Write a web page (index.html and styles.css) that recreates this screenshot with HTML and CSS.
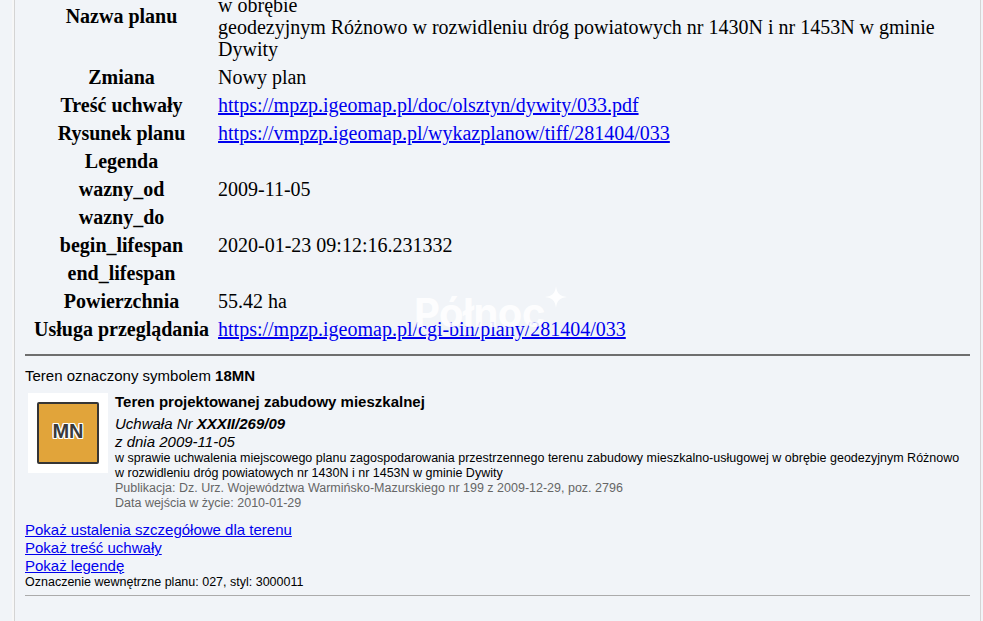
FILE: index.html
```html
<!DOCTYPE html>
<html lang="pl">

<head>
    <meta charset="UTF-8">
    <meta name="viewport" content="width=device-width, initial-scale=1.0">
    <title>Plan miejscowy - Dywity</title>
    <link rel="stylesheet" href="styles.css">
</head>

<body>
    <div class="sheet">
        <table class="plan">
            <tr>
                <th>Nazwa planu</th>
                <td>Miejscowy plan zagospodarowania przestrzennego terenu zabudowy<br>w obrębie<br>geodezyjnym Różnowo w rozwidleniu dróg powiatowych nr 1430N i nr 1453N w gminie Dywity</td>
            </tr>
            <tr>
                <th>Zmiana</th>
                <td>Nowy plan</td>
            </tr>
            <tr>
                <th>Treść uchwały</th>
                <td><a href="#">https://mpzp.igeomap.pl/doc/olsztyn/dywity/033.pdf</a></td>
            </tr>
            <tr>
                <th>Rysunek planu</th>
                <td><a href="#">https://vmpzp.igeomap.pl/wykazplanow/tiff/281404/033</a></td>
            </tr>
            <tr>
                <th>Legenda</th>
                <td></td>
            </tr>
            <tr>
                <th>wazny_od</th>
                <td>2009-11-05</td>
            </tr>
            <tr>
                <th>wazny_do</th>
                <td></td>
            </tr>
            <tr>
                <th>begin_lifespan</th>
                <td>2020-01-23 09:12:16.231332</td>
            </tr>
            <tr>
                <th>end_lifespan</th>
                <td></td>
            </tr>
            <tr>
                <th>Powierzchnia</th>
                <td>55.42 ha</td>
            </tr>
            <tr>
                <th>Usługa przeglądania</th>
                <td><a href="#">https://mpzp.igeomap.pl/cgi-bin/plany/281404/033</a></td>
            </tr>
        </table>

        <hr class="rule">

        <p class="symbol">Teren oznaczony symbolem <b>18MN</b></p>

        <div class="zone">
            <div class="zone-icon">
                <div class="zone-swatch">MN</div>
            </div>
            <div class="zone-info">
                <div class="zone-title">Teren projektowanej zabudowy mieszkalnej</div>
                <div class="resolution">Uchwała Nr <b>XXXII/269/09</b></div>
                <div class="resolution">z dnia 2009-11-05</div>
                <div class="subject">w sprawie uchwalenia miejscowego planu zagospodarowania przestrzennego terenu zabudowy mieszkalno-usługowej w obrębie geodezyjnym Różnowo w rozwidleniu dróg powiatowych nr 1430N i nr 1453N w gminie Dywity</div>
                <div class="meta">Publikacja: Dz. Urz. Województwa Warmińsko-Mazurskiego nr 199 z 2009-12-29, poz. 2796</div>
                <div class="meta">Data wejścia w życie: 2010-01-29</div>
            </div>
        </div>

        <div class="links">
            <a href="#">Pokaż ustalenia szczegółowe dla terenu</a>
            <a href="#">Pokaż treść uchwały</a>
            <a href="#">Pokaż legendę</a>
        </div>
        <div class="internal">Oznaczenie wewnętrzne planu: 027, styl: 3000011</div>

        <hr class="rule light">
    </div>

    <div class="brand">Północ<svg class="brand-star" viewBox="0 0 24 24" width="22" height="22"><path d="M12 0C13 8 16 11 24 12C16 13 13 16 12 24C11 16 8 13 0 12C8 11 11 8 12 0Z" fill="currentColor"/></svg></div>
</body>

</html>
```

FILE: styles.css
```css
html {
    overflow: hidden;
}

body {
    margin: 0;
    background-color: #F1F4F8;
    font-family: "Liberation Sans", Arial, sans-serif;
    color: #000;
}

.sheet {
    margin: -31px 2px 0 14px;
    padding: 0 10px 0 10px;
    border-left: 1px solid #D4D4D4;
    border-right: 1px solid #D4D4D4;
    box-shadow: -2px 0 0 #F7F7F7;
    min-height: 700px;
}

table.plan {
    width: 100%;
    border-collapse: collapse;
    font-family: "Liberation Serif", "Times New Roman", serif;
    font-size: 20px;
    line-height: 22px;
}

table.plan th {
    width: 1%;
    white-space: nowrap;
    padding: 3px 3px 3px 9px;
    text-align: center;
}

table.plan td {
    padding: 3px 6px;
    text-align: left;
}

a {
    color: #0000EE;
}

hr.rule {
    margin: 11px 0 0 0;
    border: none;
    border-top: 2px solid #6E6E6E;
}

hr.rule.light {
    margin-top: 5px;
    border-top: 1px solid #ABABAB;
}

.symbol {
    margin: 12px 0 0 0;
    font-size: 15px;
    line-height: 16px;
}

.zone {
    display: flex;
    gap: 7px;
    margin: 9px 0 0 3px;
}

.zone-icon {
    flex: 0 0 80px;
    height: 80px;
    background-color: #FFF;
    display: flex;
    align-items: center;
    justify-content: center;
}

.zone-swatch {
    width: 58px;
    height: 54px;
    padding-bottom: 4px;
    background-color: #E1A43A;
    border: 2px solid #353535;
    border-radius: 2px;
    display: flex;
    align-items: center;
    justify-content: center;
    font-size: 20px;
    font-weight: bold;
    color: #3A3A3A;
    text-shadow: 1px 0 0 #FFF, -1px 0 0 #FFF, 0 1px 0 #FFF, 0 -1px 0 #FFF, 1px 1px 0 #FFF, -1px -1px 0 #FFF, 1px -1px 0 #FFF, -1px 1px 0 #FFF;
}

.zone-info {
    flex: 1;
}

.zone-title {
    font-size: 15px;
    line-height: 18px;
    font-weight: bold;
    margin-bottom: 4px;
}

.resolution {
    font-size: 15px;
    line-height: 18px;
    font-style: italic;
}

.subject,
.meta {
    font-size: 12.5px;
    line-height: 15px;
}

.meta {
    color: #666;
}

.links {
    margin-top: 10px;
    font-size: 15px;
    line-height: 18px;
}

.links a {
    display: block;
    width: max-content;
}

.internal {
    font-size: 12.5px;
    line-height: 15px;
}

/* znak wodny w prawym dolnym rogu mapy */
.brand {
    position: absolute;
    left: 414px;
    top: 291px;
    font-family: Inter, "Noto Sans", sans-serif;
    font-weight: 700;
    font-size: 40px;
    line-height: 44px;
    color: rgba(255, 255, 255, 0.9);
    letter-spacing: -0.5px;
    display: flex;
    align-items: flex-start;
}

.brand-star {
    margin: -5px 0 0 0;
}
```
